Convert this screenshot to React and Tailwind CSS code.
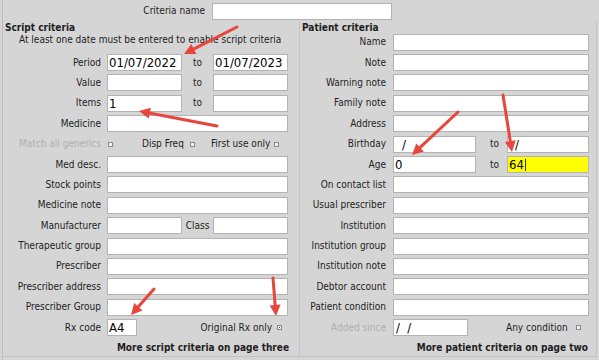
import React from "react";

const RED = "#e8453c";

const Arrow = ({ x1, y1, x2, y2 }) => {
  const dx = x2 - x1;
  const dy = y2 - y1;
  const len = Math.hypot(dx, dy);
  const ux = dx / len;
  const uy = dy / len;
  const hl = 11;
  const hw = 5.5;
  const bx = x2 - ux * hl;
  const by = y2 - uy * hl;
  const pts = `${x2},${y2} ${bx - uy * hw},${by + ux * hw} ${bx + uy * hw},${by - ux * hw}`;
  return (
    <g>
      <line x1={x1} y1={y1} x2={bx + ux * 2} y2={by + uy * 2} stroke={RED} strokeWidth="3" strokeLinecap="round" />
      <polygon points={pts} fill={RED} />
    </g>
  );
};

const ARROWS = [
  [237, 27, 184, 54],
  [217, 126, 139, 111],
  [458, 112, 412, 155],
  [503, 95, 512, 152],
  [154, 289, 131, 315],
  [273, 278, 276, 316],
];

const Row = ({ children, className = "" }) => (
  <div className={`flex h-[20.4px] shrink-0 items-center ${className}`}>{children}</div>
);

const Box = ({ className = "", highlight, children }) => (
  <div
    className={`flex h-[17px] shrink-0 items-center border border-[#b3b3b3] px-[1px] text-[13px] leading-none text-black ${
      highlight ? "bg-[#ffff00]" : "bg-white"
    } ${className}`}
  >
    {children}
  </div>
);

const Check = ({ checked }) => (
  <span className="flex h-[5px] w-[5px] shrink-0 items-center justify-center border border-[#8a8a8a] bg-[#f2f2f2]">
    {checked && <span className="h-[1px] w-[1px] bg-[#444]" />}
  </span>
);

const LeftLabel = ({ children, muted }) => (
  <span className={`w-[98px] shrink-0 text-right ${muted ? "text-[#b0b0b0]" : ""}`}>{children}</span>
);

const RightLabel = ({ children, muted }) => (
  <span className={`w-[86px] shrink-0 text-right ${muted ? "text-[#b0b0b0]" : ""}`}>{children}</span>
);

export default function App() {
  const leftRange = (label, a, b) => (
    <Row key={label}>
      <LeftLabel>{label}</LeftLabel>
      <Box className="ml-[6px] w-[75px]">{a}</Box>
      <span className="w-[31px] shrink-0 pl-[11px]">to</span>
      <Box className="w-[75px]">{b}</Box>
    </Row>
  );

  const leftFull = (label) => (
    <Row key={label}>
      <LeftLabel>{label}</LeftLabel>
      <Box className="ml-[6px] w-[181px]" />
    </Row>
  );

  const rightFull = (label) => (
    <Row key={label}>
      <RightLabel>{label}</RightLabel>
      <Box className="ml-[7px] w-[196px]" />
    </Row>
  );

  return (
    <div className="relative h-[360px] w-[599px] overflow-hidden bg-[#d5d5d5] font-['DejaVu_Sans_Condensed','DejaVu_Sans',sans-serif] text-[10px] leading-[12px] text-[#1e1e1e] font-stretch-condensed">
      <div className="ml-[2px] h-full border-l border-[#bdbdbd]">
        {/* criteria name */}
        <div className="flex h-[22px] items-center">
          <span className="w-[202px] text-right">Criteria name</span>
          <Box className="ml-[7px] w-[180px]" />
        </div>

        <div className="flex">
          {/* script criteria */}
          <div className="flex h-[335px] w-[296px] shrink-0 flex-col border-b border-[#c2c2c2]">
            <div className="h-[10px] pl-[2px] font-bold">Script criteria</div>
            <Row className="pb-[4px] pl-[16px]">At least one date must be entered to enable script criteria</Row>
            {leftRange("Period", "01/07/2022", "01/07/2023")}
            {leftRange("Value", "", "")}
            {leftRange("Items", "1", "")}
            {leftFull("Medicine")}
            <Row>
              <LeftLabel muted>Match all generics</LeftLabel>
              <span className="ml-[7px]">
                <Check />
              </span>
              <span className="ml-[29px]">Disp Freq</span>
              <span className="ml-[6px]">
                <Check />
              </span>
              <span className="ml-[16px]">First use only</span>
              <span className="ml-[4px]">
                <Check />
              </span>
            </Row>
            {["Med desc.", "Stock points", "Medicine note"].map(leftFull)}
            <Row>
              <LeftLabel>Manufacturer</LeftLabel>
              <Box className="ml-[6px] w-[75px]" />
              <span className="w-[31px] shrink-0 text-center">Class</span>
              <Box className="w-[75px]" />
            </Row>
            {["Therapeutic group", "Prescriber", "Prescriber address", "Prescriber Group"].map(leftFull)}
            <Row>
              <LeftLabel>Rx code</LeftLabel>
              <Box className="ml-[6px] w-[30px]">A4</Box>
              <span className="ml-auto">Original Rx only</span>
              <span className="ml-[5px] mr-[17px]">
                <Check checked />
              </span>
            </Row>
            <Row className="justify-end pr-[10px] font-bold">More script criteria on page three</Row>
          </div>

          {/* patient criteria */}
          <div className="flex h-[335px] w-[298px] shrink-0 flex-col border-x border-b border-[#c2c2c2]">
            <div className="h-[10px] pl-[2px] font-bold">Patient criteria</div>
            {["Name", "Note", "Warning note", "Family note", "Address"].map(rightFull)}
            <Row>
              <RightLabel>Birthday</RightLabel>
              <Box className="ml-[7px] w-[83px] pl-[8px]">/</Box>
              <span className="w-[31px] shrink-0 pl-[14px]">to</span>
              <Box className="w-[82px] pl-[7px]">/</Box>
            </Row>
            <Row>
              <RightLabel>Age</RightLabel>
              <Box className="ml-[7px] w-[83px]">0</Box>
              <span className="w-[31px] shrink-0 pl-[14px]">to</span>
              <Box className="w-[82px]" highlight>
                64
                <span className="ml-[1px] h-[12px] w-[1px] bg-[#333]" />
              </Box>
            </Row>
            {[
              "On contact list",
              "Usual prescriber",
              "Institution",
              "Institution group",
              "Institution note",
              "Debtor account",
              "Patient condition",
            ].map(rightFull)}
            <Row>
              <RightLabel muted>Added since</RightLabel>
              <Box className="ml-[7px] w-[75px] pl-[2px] text-[#555]">/&nbsp;&nbsp;/</Box>
              <span className="ml-[38px]">Any condition</span>
              <span className="ml-[8px]">
                <Check />
              </span>
            </Row>
            <Row className="justify-end pr-[8px] font-bold">More patient criteria on page two</Row>
          </div>
        </div>
      </div>

      <svg className="pointer-events-none absolute inset-0" width="599" height="360">
        {ARROWS.map(([x1, y1, x2, y2], i) => (
          <Arrow key={i} x1={x1} y1={y1} x2={x2} y2={y2} />
        ))}
      </svg>
    </div>
  );
}
